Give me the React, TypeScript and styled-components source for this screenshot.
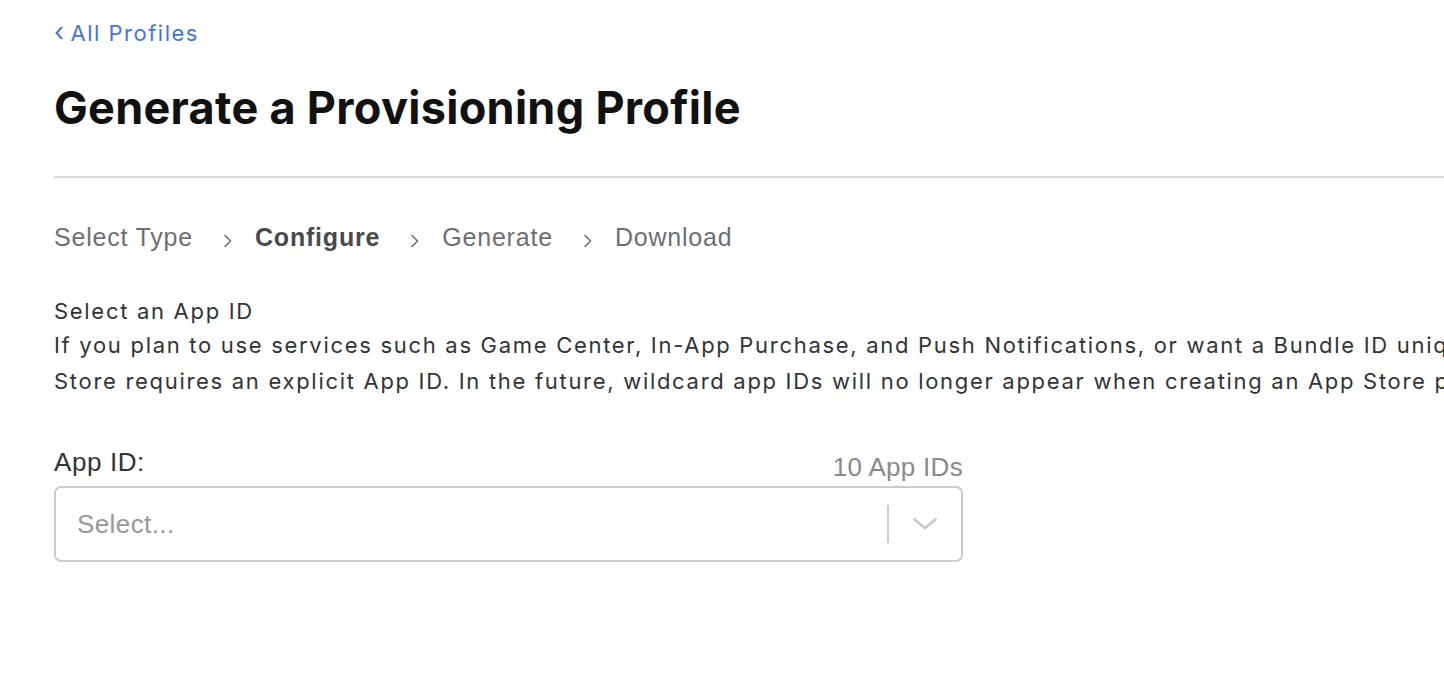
import React from "react";
import styled, { createGlobalStyle } from "styled-components";

const GlobalStyle = createGlobalStyle`
  html, body {
    margin: 0;
    padding: 0;
    background: #ffffff;
    overflow: hidden;
  }
`;

const steps = [
  { label: "Select Type", active: false },
  { label: "Configure", active: true },
  { label: "Generate", active: false },
  { label: "Download", active: false },
];

const ChevronSmall = () => (
  <svg width="10" height="16" viewBox="0 0 10 16" fill="none">
    <path d="M2 2.5L7.5 8L2 13.5" stroke="#6e6e73" strokeWidth="1.6" strokeLinecap="round" strokeLinejoin="round" />
  </svg>
);

const App: React.FC = () => {
  return (
    <Page>
      <GlobalStyle />
      <BackLink href="#">
        <BackArrow>‹</BackArrow> All Profiles
      </BackLink>
      <Title>Generate a Provisioning Profile</Title>
      <Divider />

      <Steps>
        {steps.map((step, i) => (
          <React.Fragment key={step.label}>
            {i > 0 && (
              <StepArrow>
                <ChevronSmall />
              </StepArrow>
            )}
            <Step $active={step.active}>{step.label}</Step>
          </React.Fragment>
        ))}
      </Steps>

      <Section>
        <SectionTitle>Select an App ID</SectionTitle>
        <Description>
          If you plan to use services such as Game Center, In-App Purchase, and Push Notifications, or want a Bundle ID unique to a single app, use an explicit App ID. Distributing on the App
          <br />
          Store requires an explicit App ID. In the future, wildcard app IDs will no longer appear when creating an App Store provisioning profile.
        </Description>
      </Section>

      <Field>
        <FieldHeader>
          <Label>App ID:</Label>
          <Counter>10 App IDs</Counter>
        </FieldHeader>
        <SelectBox>
          <Placeholder>Select...</Placeholder>
          <Indicators>
            <Separator />
            <Dropdown>
              <svg width="26" height="14" viewBox="0 0 26 14" fill="none">
                <path d="M2.5 2.5L13 11L23.5 2.5" stroke="#c8c8c8" strokeWidth="2.8" strokeLinecap="round" strokeLinejoin="round" />
              </svg>
            </Dropdown>
          </Indicators>
        </SelectBox>
      </Field>
    </Page>
  );
};

const Page = styled.div`
  width: 2200px;
  padding: 16px 0 0 54px;
  font-family: Inter, "Liberation Sans", sans-serif;
  color: #1d1d1f;
`;

const BackLink = styled.a`
  display: inline-flex;
  align-items: center;
  gap: 5px;
  font-size: 22px;
  line-height: 34px;
  letter-spacing: 1.5px;
  color: #4378d2;
  text-decoration: none;
`;

const BackArrow = styled.span`
  font-size: 26px;
  line-height: 1;
  margin-top: -3px;
`;

const Title = styled.h1`
  margin: 30px 0 0;
  font-size: 45px;
  line-height: 56px;
  font-weight: 700;
  letter-spacing: 0.3px;
  color: #111111;
`;

const Divider = styled.hr`
  width: 1600px;
  margin: 40px 0 0;
  border: none;
  border-top: 2px solid #dcdcdc;
`;

const Steps = styled.div`
  display: flex;
  align-items: center;
  margin-top: 41px;
  font-family: "Liberation Sans", Arial, sans-serif;
  font-size: 25px;
  line-height: 36px;
  letter-spacing: 0.8px;
`;

const Step = styled.span<{ $active: boolean }>`
  color: ${({ $active }) => ($active ? "#4a4a4a" : "#6e6e73")};
  font-weight: ${({ $active }) => ($active ? 700 : 400)};
`;

const StepArrow = styled.span`
  display: inline-flex;
  margin: 8px 22px 0 30px;
`;

const Section = styled.div`
  margin-top: 40px;
`;

const SectionTitle = styled.div`
  font-size: 22px;
  line-height: 32px;
  letter-spacing: 1.7px;
  color: #333336;
`;

const Description = styled.p`
  margin: 0;
  font-size: 22px;
  line-height: 36px;
  letter-spacing: 1.7px;
  color: #333336;
  white-space: nowrap;
`;

const Field = styled.div`
  width: 909px;
  margin-top: 48px;
  font-family: "Liberation Sans", Arial, sans-serif;
`;

const FieldHeader = styled.div`
  display: flex;
  justify-content: space-between;
  align-items: flex-end;
`;

const Label = styled.label`
  font-size: 26px;
  line-height: 30px;
  letter-spacing: 0.6px;
  color: #333333;
`;

const Counter = styled.span`
  font-size: 26px;
  line-height: 30px;
  letter-spacing: 0.3px;
  color: #8a8a8a;
  margin-bottom: -5px;
`;

const SelectBox = styled.div`
  display: flex;
  align-items: center;
  justify-content: space-between;
  box-sizing: border-box;
  height: 76px;
  margin-top: 9px;
  padding-left: 21px;
  border: 2px solid #cccccc;
  border-radius: 7px;
`;

const Placeholder = styled.span`
  font-size: 26px;
  letter-spacing: 0.4px;
  color: #999999;
`;

const Indicators = styled.div`
  display: flex;
  align-items: center;
  align-self: stretch;
`;

const Separator = styled.span`
  width: 2px;
  height: 38px;
  background: #cccccc;
`;

const Dropdown = styled.div`
  display: flex;
  align-items: center;
  justify-content: center;
  width: 72px;
`;

export default App;
